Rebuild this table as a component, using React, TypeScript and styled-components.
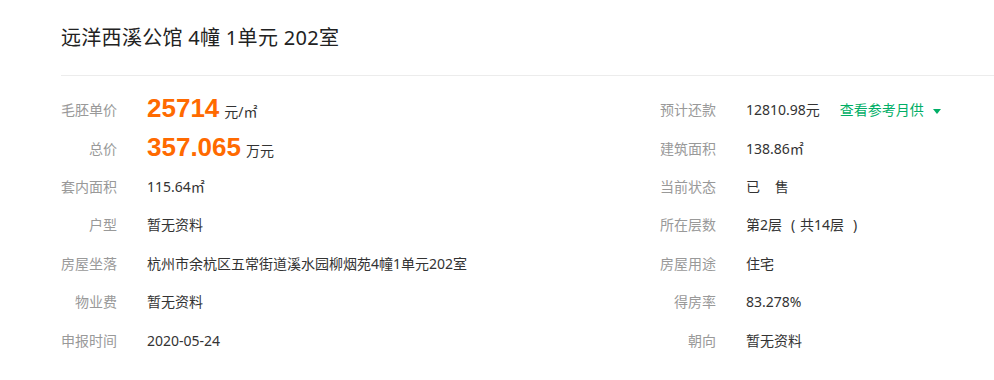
import React from "react";
import styled, { createGlobalStyle } from "styled-components";

const Global = createGlobalStyle`
  html, body { margin: 0; padding: 0; background: #fff; }
  body { font-family: "Noto Sans", "Noto Sans CJK SC", sans-serif; color: #333; }
`;

const Page = styled.div`
  padding-left: 61px;
`;

const Header = styled.div`
  height: 76px;
  padding-top: 24px;
  box-sizing: border-box;
  border-bottom: 1px solid #ececec;
`;

const Title = styled.h1`
  margin: 0;
  font-size: 20px;
  line-height: 28px;
  font-weight: normal;
  color: #222;
  letter-spacing: 0.3px;
`;

const Columns = styled.div`
  display: flex;
  padding-top: 15px;
`;

const Column = styled.div<{ $width?: number }>`
  display: flex;
  flex-direction: column;
  width: ${(p) => (p.$width ? `${p.$width}px` : "auto")};
`;

const Row = styled.div`
  height: 38.4px;
  display: flex;
  align-items: center;
`;

const Label = styled.div`
  width: 56px;
  text-align: right;
  font-size: 14px;
  line-height: 20px;
  color: #999;
  flex-shrink: 0;
`;

const Value = styled.div<{ $spaced?: boolean }>`
  margin-left: 30px;
  font-size: 14px;
  line-height: 20px;
  color: #333;
  white-space: nowrap;
  display: flex;
  align-items: baseline;
  word-spacing: ${(p) => (p.$spaced ? "11px" : "normal")};
`;

const Paren = styled.span<{ $side: "open" | "close" }>`
  display: inline-block;
  width: 14px;
  text-align: center;
  margin: ${(p) => (p.$side === "open" ? "0 0 0 4px" : "0 0 0 4px")};
`;

const BigNumber = styled.span`
  font-family: "Liberation Sans", sans-serif;
  font-size: 26px;
  font-weight: bold;
  color: #ff6a00;
  line-height: 20px;
  margin-right: 5px;
`;

const Unit = styled.span`
  font-size: 14px;
  color: #333;
`;

const Link = styled.a`
  margin-left: 20px;
  color: #00ae66;
  font-size: 14px;
  display: inline-flex;
  align-items: center;
  cursor: pointer;
`;

const Caret = styled.span`
  display: inline-block;
  margin-left: 9px;
  width: 0;
  height: 0;
  border-left: 4px solid transparent;
  border-right: 4px solid transparent;
  border-top: 5px solid #00ae66;
  align-self: center;
  margin-top: 2px;
`;

const left = [
  { label: "套内面积", value: "115.64㎡" },
  { label: "户型", value: "暂无资料" },
  { label: "房屋坐落", value: "杭州市余杭区五常街道溪水园柳烟苑4幢1单元202室" },
  { label: "物业费", value: "暂无资料" },
  { label: "申报时间", value: "2020-05-24" },
];

const rightRest = [
  { label: "房屋用途", value: "住宅" },
  { label: "得房率", value: "83.278%" },
  { label: "朝向", value: "暂无资料" },
];

export default function App() {
  return (
    <Page>
      <Global />
      <Header>
        <Title>远洋西溪公馆 4幢 1单元 202室</Title>
      </Header>
      <Columns>
        <Column $width={599}>
          <Row>
            <Label>毛胚单价</Label>
            <Value>
              <BigNumber>25714</BigNumber>
              <Unit>元/㎡</Unit>
            </Value>
          </Row>
          <Row>
            <Label>总价</Label>
            <Value>
              <BigNumber>357.065</BigNumber>
              <Unit>万元</Unit>
            </Value>
          </Row>
          {left.map((r) => (
            <Row key={r.label}>
              <Label>{r.label}</Label>
              <Value>{r.value}</Value>
            </Row>
          ))}
        </Column>
        <Column>
          <Row>
            <Label>预计还款</Label>
            <Value>
              12810.98元
              <Link>
                查看参考月供
                <Caret />
              </Link>
            </Value>
          </Row>
          <Row>
            <Label>建筑面积</Label>
            <Value>138.86㎡</Value>
          </Row>
          <Row>
            <Label>当前状态</Label>
            <Value $spaced>已 售</Value>
          </Row>
          <Row>
            <Label>所在层数</Label>
            <Value>
              第2层<Paren $side="open">(</Paren>共14层<Paren $side="close">)</Paren>
            </Value>
          </Row>
          {rightRest.map((r) => (
            <Row key={r.label}>
              <Label>{r.label}</Label>
              <Value>{r.value}</Value>
            </Row>
          ))}
        </Column>
      </Columns>
    </Page>
  );
}
